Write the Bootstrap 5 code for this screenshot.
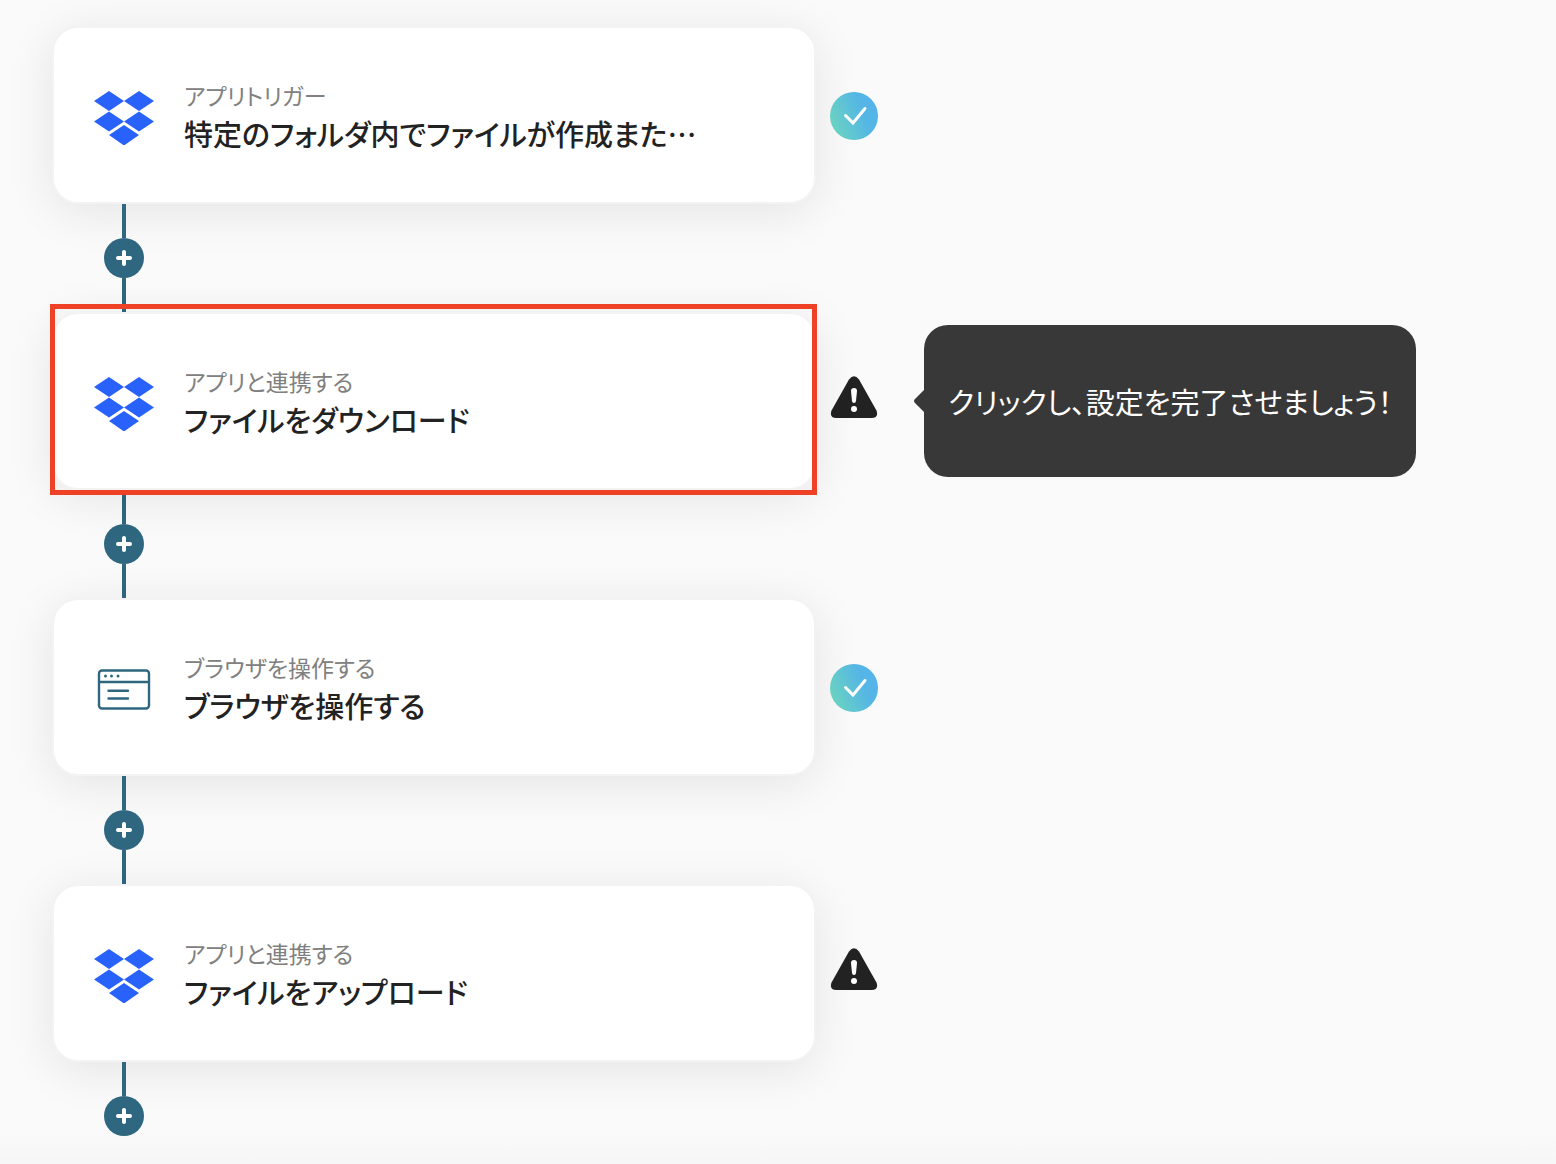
<!DOCTYPE html>
<html lang="ja">
<head>
<meta charset="utf-8">
<meta name="viewport" content="width=device-width, initial-scale=1">
<title>フローボット</title>
<link href="https://cdn.jsdelivr.net/npm/bootstrap@5.3.0/dist/css/bootstrap.min.css" rel="stylesheet">
<style>
  body {
    background: #fafafa;
    color: #222;
    font-family: "Noto Sans CJK JP", sans-serif;
    font-feature-settings: "palt";
  }
  .flow {
    padding: 26px 52px 28px;
    background: linear-gradient(to top, #f6f6f6, #fafafa 40px);
  }
  .flow-row { gap: 14px; }
  .step {
    flex: 0 1 764px;
    min-height: 178px;
    gap: 30px;
    padding: 0 40px;
    background: #fff;
    border: 2px solid #f3f3f3;
    border-radius: 26px;
    box-shadow: 0 8px 48px rgba(0, 0, 0, .09);
    color: #222;
  }
  .step-kind { font-size: 23px; line-height: 36px; color: #808080; }
  .step-title { font-size: 29px; line-height: 40px; font-weight: 500; }
  .step-focus::after {
    content: "";
    position: absolute;
    inset: -10px -3px -7px -4px;
    border: 5px solid #ee4126;
    pointer-events: none;
  }
  .joint { width: 40px; margin-left: 52px; }
  .joint-line { width: 4px; height: 34px; background: #2f6781; }
  .joint-add { width: 40px; height: 40px; background: #2f6781; }
  .joint-add:hover { background: #25556b; }
  .hint {
    margin-left: 32px;
    padding: 56px 24px;
    background: #383838;
    color: #fff;
    border-radius: 24px;
    font-size: 29px;
    line-height: 40px;
  }
  .hint-tip { position: absolute; right: 100%; top: 50%; transform: translateY(-50%); }
</style>
</head>
<body>
<svg width="0" height="0" class="position-absolute" aria-hidden="true">
  <symbol id="dropbox" viewBox="0 0 60 60">
    <path fill="#2962fa" d="M15 6 30 16 15 26 0 16zM45 6 60 16 45 26 30 16zM15 26.500 30 36.500 15 46.500 0 36.500zM45 26.500 60 36.500 45 46.500 30 36.500zM30 40 45 50 30 60.500 15 50z"/>
  </symbol>
  <symbol id="browser" viewBox="0 0 60 60">
    <g fill="none" stroke="#2f6781" stroke-width="2.400" stroke-linecap="round">
      <rect x="5" y="13.500" width="50" height="38" rx="3"/>
      <path d="M5 25H55M14.500 33.700H34M14.500 41.500H34"/>
    </g>
    <g fill="#2f6781"><circle cx="11.500" cy="19" r="1.500"/><circle cx="17.500" cy="19" r="1.500"/><circle cx="24" cy="19" r="1.500"/></g>
  </symbol>
  <linearGradient id="okGrad" x1="0" y1="0.7" x2="1" y2="0.3">
    <stop offset="0" stop-color="#6bd4bf"/><stop offset=".7" stop-color="#55b6e5"/><stop offset="1" stop-color="#55b3ea"/>
  </linearGradient>
  <symbol id="ok" viewBox="0 0 48 50">
    <circle cx="24" cy="26" r="24" fill="url(#okGrad)"/>
    <path d="M15.500 25.500 23 33 35 18.500" fill="none" stroke="#fff" stroke-width="3" stroke-linecap="round"/>
  </symbol>
  <symbol id="warn" viewBox="0 0 48 52">
    <path fill="#222" d="M19 4.500Q24-2 29 4.500L46.500 35.500Q49 43 41.500 43H6.500Q-1 43 1.500 35.500z"/>
    <path fill="#fff" d="M21 16Q21 13 24 13T27 16L26 26Q25.700 28 24 28T22 26z"/>
    <circle cx="24" cy="34" r="3" fill="#fff"/>
  </symbol>
  <symbol id="plus" viewBox="0 0 16 16">
    <path d="M8 2V14M2 8H14" stroke="#fff" stroke-width="4" stroke-linecap="round"/>
  </symbol>
</svg>

<main class="flow min-vh-100">
  <div class="flow-row d-flex align-items-center">
    <a href="#" class="step d-flex align-items-center text-decoration-none">
      <svg class="flex-shrink-0" width="60" height="60" aria-hidden="true"><use href="#dropbox"/></svg>
      <div><div class="step-kind">アプリトリガー</div><div class="step-title">特定のフォルダ内でファイルが作成また…</div></div>
    </a>
    <svg class="flex-shrink-0" width="48" height="50" role="img" aria-label="設定済み"><use href="#ok"/></svg>
  </div>
  <div class="joint d-flex flex-column align-items-center">
    <div class="joint-line"></div>
    <button type="button" class="joint-add btn border-0 rounded-circle p-0 d-flex align-items-center justify-content-center" aria-label="追加"><svg width="16" height="16"><use href="#plus"/></svg></button>
    <div class="joint-line"></div>
  </div>

  <div class="flow-row d-flex align-items-center">
    <a href="#" class="step step-focus position-relative d-flex align-items-center text-decoration-none">
      <svg class="flex-shrink-0" width="60" height="60" aria-hidden="true"><use href="#dropbox"/></svg>
      <div><div class="step-kind">アプリと連携する</div><div class="step-title">ファイルをダウンロード</div></div>
    </a>
    <svg class="flex-shrink-0" width="48" height="52" role="img" aria-label="未設定"><use href="#warn"/></svg>
    <div class="hint position-relative text-nowrap" role="status">
      <svg class="hint-tip" width="10" height="24" viewBox="0 0 10 24" aria-hidden="true"><path fill="#383838" d="M10 1V23L1 14Q-1 12 1 10z"/></svg>
      クリックし、設定を完了させましょう！
    </div>
  </div>
  <div class="joint d-flex flex-column align-items-center">
    <div class="joint-line"></div>
    <button type="button" class="joint-add btn border-0 rounded-circle p-0 d-flex align-items-center justify-content-center" aria-label="追加"><svg width="16" height="16"><use href="#plus"/></svg></button>
    <div class="joint-line"></div>
  </div>

  <div class="flow-row d-flex align-items-center">
    <a href="#" class="step d-flex align-items-center text-decoration-none">
      <svg class="flex-shrink-0" width="60" height="60" aria-hidden="true"><use href="#browser"/></svg>
      <div><div class="step-kind">ブラウザを操作する</div><div class="step-title">ブラウザを操作する</div></div>
    </a>
    <svg class="flex-shrink-0" width="48" height="50" role="img" aria-label="設定済み"><use href="#ok"/></svg>
  </div>
  <div class="joint d-flex flex-column align-items-center">
    <div class="joint-line"></div>
    <button type="button" class="joint-add btn border-0 rounded-circle p-0 d-flex align-items-center justify-content-center" aria-label="追加"><svg width="16" height="16"><use href="#plus"/></svg></button>
    <div class="joint-line"></div>
  </div>

  <div class="flow-row d-flex align-items-center">
    <a href="#" class="step d-flex align-items-center text-decoration-none">
      <svg class="flex-shrink-0" width="60" height="60" aria-hidden="true"><use href="#dropbox"/></svg>
      <div><div class="step-kind">アプリと連携する</div><div class="step-title">ファイルをアップロード</div></div>
    </a>
    <svg class="flex-shrink-0" width="48" height="52" role="img" aria-label="未設定"><use href="#warn"/></svg>
  </div>
  <div class="joint d-flex flex-column align-items-center">
    <div class="joint-line"></div>
    <button type="button" class="joint-add btn border-0 rounded-circle p-0 d-flex align-items-center justify-content-center" aria-label="追加"><svg width="16" height="16"><use href="#plus"/></svg></button>
  </div>
</main>
<script src="https://cdn.jsdelivr.net/npm/bootstrap@5.3.0/dist/js/bootstrap.bundle.min.js"></script>
</body>
</html>
